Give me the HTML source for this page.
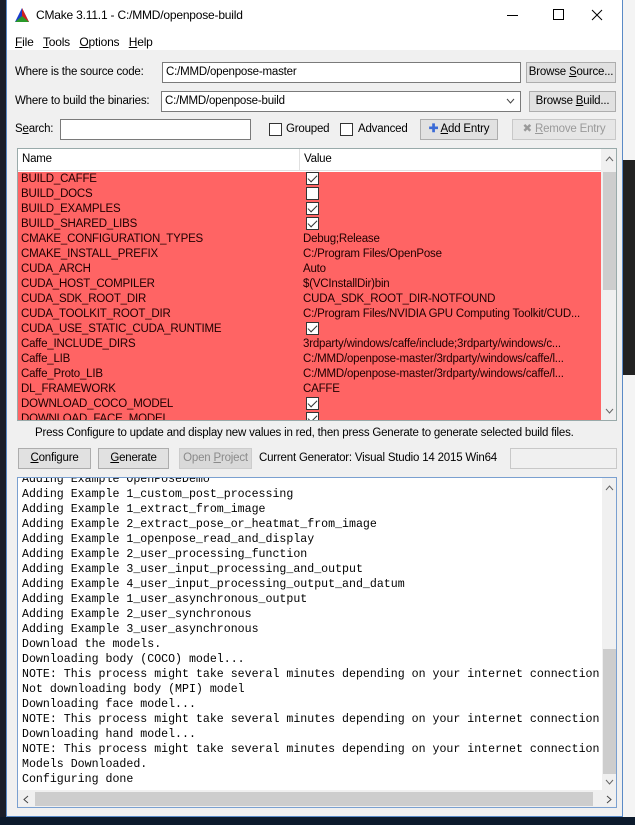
<!DOCTYPE html>
<html><head><meta charset="utf-8"><style>
*{margin:0;padding:0;box-sizing:border-box}
body{width:635px;height:825px;overflow:hidden;background:#f4f4f4;font-family:"Liberation Sans",sans-serif;font-size:11.5px;letter-spacing:-0.2px;color:#000;position:relative}
.a{position:absolute;white-space:nowrap}
.win{left:6px;top:0;width:617px;height:817px;background:#f0f0f0;border:1px solid #5a8ac6;border-top:none}
.inp{background:#fff;border:1px solid #7a7a7a;padding:2px 3px;height:21px;line-height:15px}
.btn{background:#e1e1e1;border:1px solid #adadad;text-align:center;line-height:19px;height:21px;overflow:hidden}
.cb{width:13px;height:13px;border:1px solid #333;background:#fff}
.row{height:15px;line-height:15px;white-space:nowrap;overflow:hidden}
.ck{display:inline-block;width:13px;height:13px;border:1px solid #333;background:#fff;vertical-align:-2px;position:relative}
.ck.on::after{content:"";position:absolute;left:3px;top:0px;width:4px;height:8px;border:solid #333;border-width:0 1.5px 1.5px 0;transform:rotate(45deg)}
.mono{font-family:"Liberation Mono",monospace;font-size:11.6px;letter-spacing:0;line-height:15px;white-space:pre}
u{text-decoration:underline}
</style></head><body>
<div class="a" style="left:0;top:0;width:6px;height:825px;background:#1a1e2a"></div>
<div class="a" style="left:0;top:817px;width:635px;height:8px;background:#0c1a2c"></div>
<div class="a" style="left:623px;top:160px;width:12px;height:215px;background:#222"></div>
<div class="a win"></div>
<div class="a" style="left:7px;top:0;width:615px;height:50px;background:#fff"></div>
<svg class="a" style="left:14px;top:7px" width="16" height="16"><polygon points="8,1 1,15 15,15" fill="#1a3ccc"/><polygon points="8,1 8,15 15,15" fill="#d02020"/><polygon points="8,9 1,15 15,15" fill="#2a9a2a"/></svg>
<div class="a" style="left:36px;top:8px;font-size:12px">CMake 3.11.1 - C:/MMD/openpose-build</div>
<div class="a" style="left:507px;top:15px;width:11px;height:1px;background:#000"></div>
<div class="a" style="left:553px;top:9px;width:11px;height:11px;border:1px solid #000"></div>
<svg class="a" style="left:591px;top:9px" width="12" height="12"><path d="M1 1L11 11M11 1L1 11" stroke="#000" stroke-width="1"/></svg>
<div class="a" style="left:15px;top:35px;font-size:12px"><u>F</u>ile&nbsp;&nbsp;&nbsp;<u>T</u>ools&nbsp;&nbsp;&nbsp;<u>O</u>ptions&nbsp;&nbsp;&nbsp;<u>H</u>elp</div>

<div class="a" style="left:15px;top:66px">Where is the source code:</div>
<div class="a inp" style="left:162px;top:62px;width:359px">C:/MMD/openpose-master</div>
<div class="a btn" style="left:526px;top:62px;width:90px">Browse <u>S</u>ource...</div>
<div class="a" style="left:15px;top:95px">Where to build the binaries:</div>
<div class="a inp" style="left:161px;top:91px;width:360px">C:/MMD/openpose-build<svg style="position:absolute;right:5px;top:6px" width="9" height="6"><path d="M1 1L4.5 5L8 1" stroke="#444" fill="none"/></svg></div>
<div class="a btn" style="left:529px;top:91px;width:87px">Browse <u>B</u>uild...</div>
<div class="a" style="left:15px;top:123px">S<u>e</u>arch:</div>
<div class="a inp" style="left:60px;top:119px;width:191px"></div>
<div class="a cb" style="left:269px;top:123px"></div>
<div class="a" style="left:286px;top:123px">Grouped</div>
<div class="a cb" style="left:340px;top:123px"></div>
<div class="a" style="left:358px;top:123px">Advanced</div>
<div class="a btn" style="left:420px;top:119px;width:78px"><span style="color:#3a6ad6;font-weight:bold">✚</span> <u>A</u>dd Entry</div>
<div class="a btn" style="left:512px;top:119px;width:104px;color:#9a9a9a;background:#e6e6e6;border-color:#c8c8c8">✖ <u>R</u>emove Entry</div>

<div class="a" style="left:17px;top:148px;width:600px;height:273px;background:#fff;border:1px solid #9aa;overflow:hidden">
<div class="a" style="left:0;top:0;width:583px;height:22px;background:#fff;border-bottom:1px solid #e0e0e0"></div>
<div class="a" style="left:4px;top:4px">Name</div>
<div class="a" style="left:281px;top:0;width:1px;height:22px;background:#e0e0e0"></div>
<div class="a" style="left:286px;top:4px">Value</div>
<div class="a" style="left:0;top:23px;width:583px;height:250px;background:#ff6464">
<div class="a" style="left:3px;top:0;width:270px;color:#200000">
<div class="row">BUILD_CAFFE</div><div class="row">BUILD_DOCS</div><div class="row">BUILD_EXAMPLES</div><div class="row">BUILD_SHARED_LIBS</div><div class="row">CMAKE_CONFIGURATION_TYPES</div><div class="row">CMAKE_INSTALL_PREFIX</div><div class="row">CUDA_ARCH</div><div class="row">CUDA_HOST_COMPILER</div><div class="row">CUDA_SDK_ROOT_DIR</div><div class="row">CUDA_TOOLKIT_ROOT_DIR</div><div class="row">CUDA_USE_STATIC_CUDA_RUNTIME</div><div class="row">Caffe_INCLUDE_DIRS</div><div class="row">Caffe_LIB</div><div class="row">Caffe_Proto_LIB</div><div class="row">DL_FRAMEWORK</div><div class="row">DOWNLOAD_COCO_MODEL</div><div class="row">DOWNLOAD_FACE_MODEL</div>
</div>
<div class="a" style="left:285px;top:0;width:298px;color:#200000">
<div class="row">&nbsp;<span class="ck on"></span></div><div class="row">&nbsp;<span class="ck"></span></div><div class="row">&nbsp;<span class="ck on"></span></div><div class="row">&nbsp;<span class="ck on"></span></div><div class="row">Debug;Release</div><div class="row">C:/Program Files/OpenPose</div><div class="row">Auto</div><div class="row">$(VCInstallDir)bin</div><div class="row">CUDA_SDK_ROOT_DIR-NOTFOUND</div><div class="row">C:/Program Files/NVIDIA GPU Computing Toolkit/CUD...</div><div class="row">&nbsp;<span class="ck on"></span></div><div class="row">3rdparty/windows/caffe/include;3rdparty/windows/c...</div><div class="row">C:/MMD/openpose-master/3rdparty/windows/caffe/l...</div><div class="row">C:/MMD/openpose-master/3rdparty/windows/caffe/l...</div><div class="row">CAFFE</div><div class="row">&nbsp;<span class="ck on"></span></div><div class="row">&nbsp;<span class="ck on"></span></div>
</div></div>
<div class="a" style="left:583px;top:0;width:16px;height:273px;background:#f0f0f0"></div>
<div class="a" style="left:585px;top:23px;width:13px;height:118px;background:#cdcdcd"></div>
<svg class="a" style="left:587px;top:7px" width="9" height="6"><path d="M1 5L4.5 1L8 5" stroke="#666" fill="none"/></svg>
<svg class="a" style="left:587px;top:259px" width="9" height="6"><path d="M1 1L4.5 5L8 1" stroke="#666" fill="none"/></svg>
</div>

<div class="a" style="left:35px;top:427px">Press Configure to update and display new values in red, then press Generate to generate selected build files.</div>
<div class="a btn" style="left:18px;top:448px;width:73px"><u>C</u>onfigure</div>
<div class="a btn" style="left:98px;top:448px;width:71px"><u>G</u>enerate</div>
<div class="a btn" style="left:179px;top:448px;width:73px;color:#8a8a8a;background:#d9d9d9;border-color:#ccc">Open <u>P</u>roject</div>
<div class="a" style="left:259px;top:452px">Current Generator: Visual Studio 14 2015 Win64</div>
<div class="a" style="left:510px;top:448px;width:107px;height:21px;border:1px solid #c8c8c8;background:#f0f0f0"></div>

<div class="a" style="left:17px;top:477px;width:600px;height:331px;background:#fff;border:1px solid #7aa0d0;overflow:hidden">
<div class="a mono" style="left:4px;top:-6px">Adding Example OpenPoseDemo
Adding Example 1_custom_post_processing
Adding Example 1_extract_from_image
Adding Example 2_extract_pose_or_heatmat_from_image
Adding Example 1_openpose_read_and_display
Adding Example 2_user_processing_function
Adding Example 3_user_input_processing_and_output
Adding Example 4_user_input_processing_output_and_datum
Adding Example 1_user_asynchronous_output
Adding Example 2_user_synchronous
Adding Example 3_user_asynchronous
Download the models.
Downloading body (COCO) model...
NOTE: This process might take several minutes depending on your internet connection
Not downloading body (MPI) model
Downloading face model...
NOTE: This process might take several minutes depending on your internet connection
Downloading hand model...
NOTE: This process might take several minutes depending on your internet connection
Models Downloaded.
Configuring done</div>
<div class="a" style="left:584px;top:0;width:15px;height:312px;background:#f0f0f0"></div>
<div class="a" style="left:585px;top:171px;width:13px;height:125px;background:#cdcdcd"></div>
<svg class="a" style="left:587px;top:7px" width="9" height="6"><path d="M1 5L4.5 1L8 5" stroke="#666" fill="none"/></svg>
<svg class="a" style="left:587px;top:301px" width="9" height="6"><path d="M1 1L4.5 5L8 1" stroke="#666" fill="none"/></svg>
<div class="a" style="left:0;top:312px;width:599px;height:18px;background:#f0f0f0"></div>
<div class="a" style="left:17px;top:314px;width:558px;height:14px;background:#cdcdcd"></div>
<svg class="a" style="left:5px;top:317px" width="6" height="9"><path d="M5 1L1 4.5L5 8" stroke="#444" fill="none"/></svg>
<svg class="a" style="left:588px;top:317px" width="6" height="9"><path d="M1 1L5 4.5L1 8" stroke="#444" fill="none"/></svg>
</div>
</body></html>
